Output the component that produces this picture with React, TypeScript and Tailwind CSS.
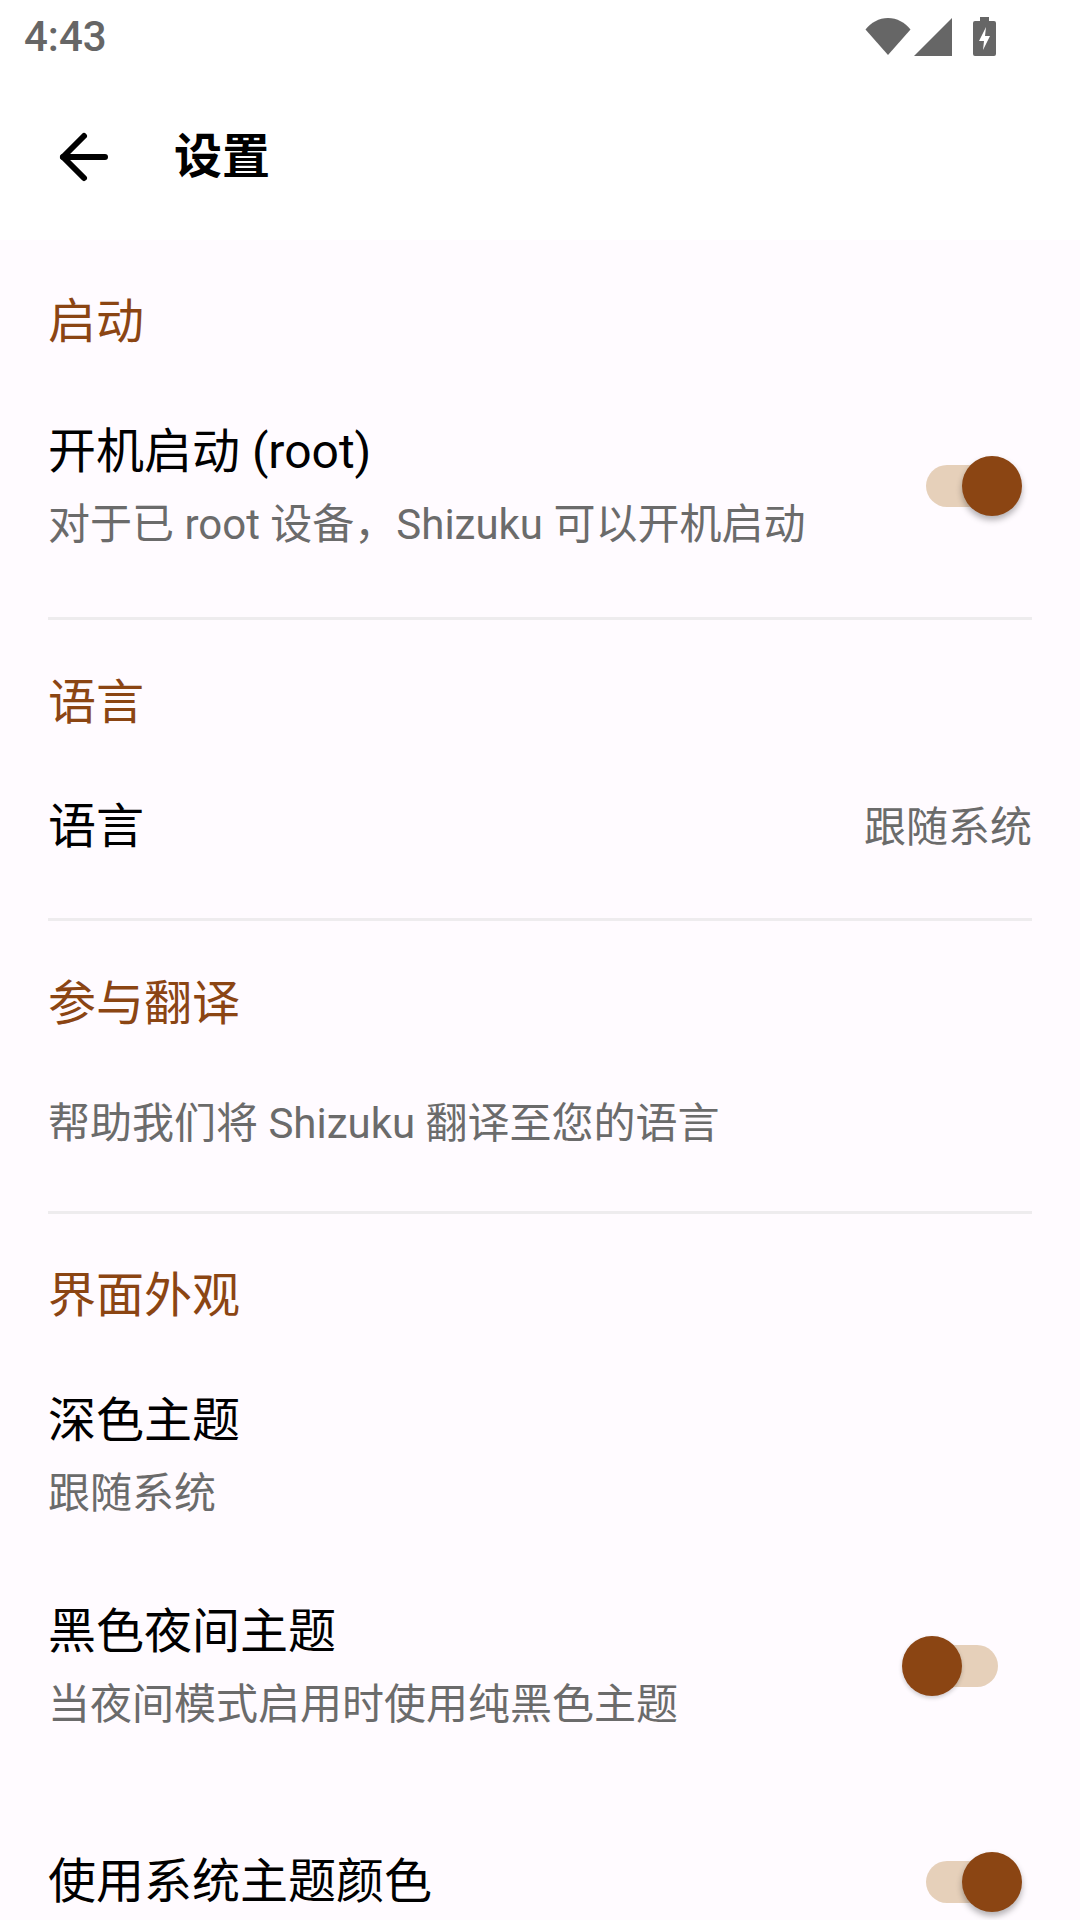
import { ArrowLeft } from "lucide-react";

const font = "font-['Roboto','Noto_Sans_CJK_SC',sans-serif]";

function Toggle({ on, className }: { on: boolean; className?: string }) {
  return (
    <div className={`relative h-[60px] w-[120px] flex items-center shrink-0 ${on ? "justify-end" : "justify-start"} ${className ?? ""}`}>
      <div className="absolute left-[24px] w-[72px] h-[42px] rounded-full bg-[#e6d0ba]" />
      <div className={`relative h-[60px] w-[60px] rounded-full bg-[#8b4513] ${on ? "shadow-[0_4px_6px_rgba(0,0,0,0.3)]" : "shadow-[0_2px_4px_rgba(0,0,0,0.2)]"}`} />
    </div>
  );
}

function Header({ children, className }: { children: string; className: string }) {
  return (
    <div className={`flex items-center px-[48px] text-[48px] leading-[64px] text-[#8b4513] ${className}`}>{children}</div>
  );
}

function Row({ title, summary, on, h }: { title: string; summary?: string; on?: boolean; h: string }) {
  return (
    <div className={`flex items-center justify-between pl-[48px] pr-[58px] ${h}`}>
      <div className="flex flex-col">
        <div className="text-[48px] leading-[72px] text-black">{title}</div>
        {summary && <div className="text-[42px] leading-[74px] text-[#6b6b6b]">{summary}</div>}
      </div>
      {on !== undefined && <Toggle on={on} className={summary ? "mb-[7px]" : ""} />}
    </div>
  );
}

function Divider() {
  return <div className="mx-[48px] h-[3px] bg-[#eeecee]" />;
}

export default function App() {
  return (
    <div className={`w-[1080px] h-[1920px] overflow-hidden bg-white ${font}`}>
      <div className="h-[73px] flex items-center justify-between pl-[24px] pr-[84px]">
        <span className="text-[42px] font-medium leading-[73px] text-[#666666]">4:43</span>
        <div className="flex items-center">
          <svg width="46" height="37" viewBox="0 0 46 37" className="mr-[3px]">
            <path d="M0.5 11.5C6 4.5 14 0 23 0s17 4.5 22.5 11.5L23 37z" fill="#666666" />
          </svg>
          <svg width="39" height="38" viewBox="0 0 39 38" className="mr-[20px]">
            <path d="M38 0v38H0z" fill="#666666" />
          </svg>
          <svg width="23" height="39" viewBox="0 0 23 39">
            <path
              fillRule="evenodd"
              d="M7 0h9v4h5a2 2 0 0 1 2 2v31a2 2 0 0 1-2 2H2a2 2 0 0 1-2-2V6a2 2 0 0 1 2-2h5zM13 10l-7 14h5l-1 9 7-14h-5z"
              fill="#666666"
            />
          </svg>
        </div>
      </div>
      <div className="h-[167px] flex items-center">
        <ArrowLeft size={72} strokeWidth={2} className="ml-[48px] text-black" />
        <span className="ml-[54px] text-[48px] font-bold text-black">设置</span>
      </div>
      <div className="bg-[#fffbff] h-[1680px]">
        <Header className="h-[164px]">启动</Header>
        <Row title="开机启动 (root)" summary="对于已 root 设备，Shizuku 可以开机启动" on={true} h="h-[213px] pb-[43px]" />
        <Divider />
        <Header className="h-[166px]">语言</Header>
        <div className="flex items-center justify-between px-[48px] h-[132px] pb-[50px]">
          <span className="text-[48px] text-black">语言</span>
          <span className="text-[42px] text-[#6b6b6b]">跟随系统</span>
        </div>
        <Divider />
        <Header className="h-[165px]">参与翻译</Header>
        <div className="flex items-center px-[48px] h-[125px] pb-[51px] text-[42px] text-[#6b6b6b]">帮助我们将 Shizuku 翻译至您的语言</div>
        <Divider />
        <Header className="h-[164px]">界面外观</Header>
        <Row title="深色主题" summary="跟随系统" h="h-[211px] pb-[51px]" />
        <Row title="黑色夜间主题" summary="当夜间模式启用时使用纯黑色主题" on={false} h="h-[211px] pb-[51px]" />
        <Row title="使用系统主题颜色" on={true} h="h-[164px]" />
      </div>
    </div>
  );
}
